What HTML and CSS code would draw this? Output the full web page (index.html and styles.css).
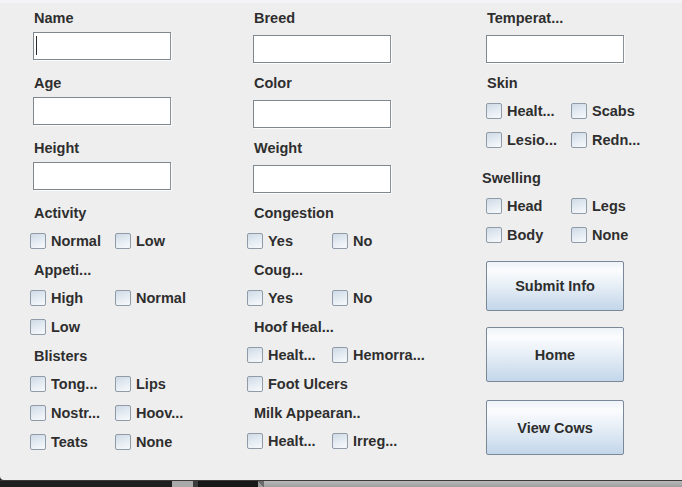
FILE: index.html
```html
<!DOCTYPE html>
<html lang="en">
<head>
<meta charset="utf-8">
<title>Cow Info</title>
<link rel="stylesheet" href="styles.css">
</head>
<body>
<div class="panel">
  <div class="topband"></div>
  <div class="cols">
    <div class="col col-a">
      <div class="group"><div class="lbl">Name</div><div class="field"><span class="caret"></span></div></div>
      <div class="group"><div class="lbl">Age</div><div class="field"></div></div>
      <div class="group"><div class="lbl">Height</div><div class="field"></div></div>
      <div class="lbl sec">Activity</div>
      <div class="row"><label class="opt"><span class="box"></span><span>Normal</span></label><label class="opt"><span class="box"></span><span>Low</span></label></div>
      <div class="lbl sec">Appeti...</div>
      <div class="row"><label class="opt"><span class="box"></span><span>High</span></label><label class="opt"><span class="box"></span><span>Normal</span></label></div>
      <div class="row"><label class="opt"><span class="box"></span><span>Low</span></label></div>
      <div class="lbl sec">Blisters</div>
      <div class="row"><label class="opt"><span class="box"></span><span>Tong...</span></label><label class="opt"><span class="box"></span><span>Lips</span></label></div>
      <div class="row"><label class="opt"><span class="box"></span><span>Nostr...</span></label><label class="opt"><span class="box"></span><span>Hoov...</span></label></div>
      <div class="row"><label class="opt"><span class="box"></span><span>Teats</span></label><label class="opt"><span class="box"></span><span>None</span></label></div>
    </div>
    <div class="col col-b">
      <div class="group"><div class="lbl">Breed</div><div class="field"></div></div>
      <div class="group"><div class="lbl">Color</div><div class="field"></div></div>
      <div class="group"><div class="lbl">Weight</div><div class="field"></div></div>
      <div class="lbl sec">Congestion</div>
      <div class="row"><label class="opt"><span class="box"></span><span>Yes</span></label><label class="opt"><span class="box"></span><span>No</span></label></div>
      <div class="lbl sec">Coug...</div>
      <div class="row"><label class="opt"><span class="box"></span><span>Yes</span></label><label class="opt"><span class="box"></span><span>No</span></label></div>
      <div class="lbl sec">Hoof Heal...</div>
      <div class="row"><label class="opt"><span class="box"></span><span>Healt...</span></label><label class="opt"><span class="box"></span><span>Hemorra...</span></label></div>
      <div class="row"><label class="opt wide"><span class="box"></span><span>Foot Ulcers</span></label></div>
      <div class="lbl sec">Milk Appearan..</div>
      <div class="row"><label class="opt"><span class="box"></span><span>Healt...</span></label><label class="opt"><span class="box"></span><span>Irreg...</span></label></div>
    </div>
    <div class="col col-c">
      <div class="group"><div class="lbl">Temperat...</div><div class="field"></div></div>
      <div class="lbl sec">Skin</div>
      <div class="row"><label class="opt"><span class="box"></span><span>Healt...</span></label><label class="opt"><span class="box"></span><span>Scabs</span></label></div>
      <div class="row"><label class="opt"><span class="box"></span><span>Lesio...</span></label><label class="opt"><span class="box"></span><span>Redn...</span></label></div>
      <div class="lbl sec out">Swelling</div>
      <div class="row"><label class="opt"><span class="box"></span><span>Head</span></label><label class="opt"><span class="box"></span><span>Legs</span></label></div>
      <div class="row"><label class="opt"><span class="box"></span><span>Body</span></label><label class="opt"><span class="box"></span><span>None</span></label></div>
      <button class="btn btn-submit">Submit Info</button>
      <button class="btn btn-home">Home</button>
      <button class="btn btn-view">View Cows</button>
    </div>
  </div>
</div>
<div class="taskbar">
  <div class="seg s1"></div>
  <div class="seg s2"></div>
  <div class="seg s3"></div>
  <div class="seg s4"></div>
  <div class="seg s5"></div>
  <div class="seg s6"></div>
</div>
</body>
</html>
```
FILE: styles.css
```css
html, body {
  margin: 0;
  padding: 0;
}
body {
  width: 682px;
  height: 487px;
  overflow: hidden;
  background: #1e1e1e;
  font-family: "Liberation Sans", Arial, sans-serif;
  color: #2e2e2e;
}
.panel {
  height: 480px;
  background: #eeeeee;
  display: flex;
  flex-direction: column;
  border-bottom-left-radius: 4px;
}
.topband {
  height: 3px;
  background: #f4f4f6;
}
.cols {
  display: flex;
  padding-left: 30px;
  padding-top: 7px;
}
.col {
  display: flex;
  flex-direction: column;
}
.col-a { width: 217px; --li: 4px; --fi: 3px; }
.col-b { width: 239px; --li: 7px; --fi: 6px; }
.col-c { flex: 1; --li: 1px; --fi: 0px; }

.lbl {
  font-weight: bold;
  font-size: 14.5px;
  line-height: 16px;
  height: 16px;
  margin-left: var(--li);
  white-space: nowrap;
}
.lbl.sec { margin-bottom: 12px; }
.lbl.out { margin-left: -4px; margin-top: 9px; }

.group {
  height: 65px;
  display: flex;
  flex-direction: column;
}
.field {
  margin-left: var(--fi);
  width: 138px;
  height: 28px;
  box-sizing: border-box;
  border: 1px solid #7f878f;
  border-right-color: #8a9198;
  background: #ffffff;
  box-shadow: 1px 1px 0 #fbfbfb;
  padding: 3px 0 0 2px;
}
.col-a .field { margin-top: 6px; }
.col-b .field, .col-c .field { margin-top: 9px; }
.caret {
  display: block;
  width: 1px;
  height: 19px;
  background: #2a2a2a;
}

.row {
  display: flex;
  height: 29px;
}
.opt {
  width: 85px;
  display: flex;
  align-items: flex-start;
  gap: 5px;
  font-weight: bold;
  font-size: 14.5px;
  line-height: 17px;
  white-space: nowrap;
}
.opt.wide { width: 170px; }
.box {
  flex: none;
  width: 16px;
  height: 16px;
  box-sizing: border-box;
  border: 1px solid #8f9ba7;
  border-radius: 2px;
  background: linear-gradient(160deg, #cfdae6 0%, #e4ebf2 50%, #f8fafc 100%);
}

.btn {
  width: 138px;
  box-sizing: border-box;
  border: 1px solid #7a8898;
  border-radius: 2px;
  background: linear-gradient(#eef3f8 0%, #fbfcfe 18%, #e6eef6 50%, #c3d6ea 100%);
  font-family: "Liberation Sans", Arial, sans-serif;
  font-weight: bold;
  font-size: 14.5px;
  color: #2e2e2e;
  padding: 0;
  display: flex;
  align-items: center;
  justify-content: center;
}
.btn-submit { height: 50px; margin-top: 5px; }
.btn-home { height: 55px; margin-top: 16px; }
.btn-view { height: 55px; margin-top: 18px; }

.taskbar {
  height: 7px;
  display: flex;
  border-top: 1px solid #3a3a3a;
  box-sizing: border-box;
}
.seg { height: 100%; }
.s1 { width: 172px; background: #1f1f1f; }
.s2 { width: 21px; background: #a9a9a9; }
.s3 { width: 5px; background: #3c3c3c; }
.s4 { width: 60px; background: #181818; }
.s5 { width: 6px; background: linear-gradient(45deg, #9a9a9a 50%, #6a6a6a 50%); }
.s6 { flex: 1; background: linear-gradient(#b9b9b9, #9e9e9e); }
```
